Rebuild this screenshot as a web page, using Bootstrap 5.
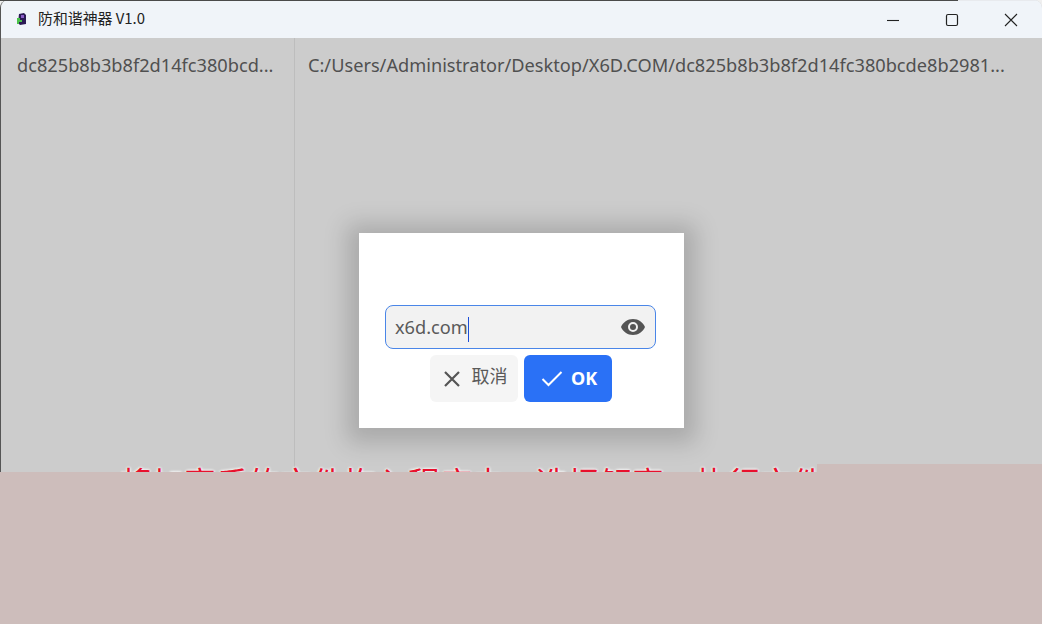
<!doctype html>
<html lang="zh">
<head>
<meta charset="utf-8">
<title>防和谐神器 V1.0</title>
<link rel="stylesheet" href="https://cdn.jsdelivr.net/npm/bootstrap@5.3.0/dist/css/bootstrap.min.css">
<style>
html,body{height:624px;overflow:hidden;margin:0;background:#f0f0f0}
body{font-family:"Noto Sans","Noto Sans CJK SC",sans-serif}
.desk{width:1042px;height:624px;overflow:hidden;position:relative;background:#f0f0f0}
.win{height:472px;background:#ccc;border-left:1px solid #555;border-radius:8px 8px 0 0;overflow:hidden;position:relative}
.lower{height:152px;background:#cdbdbb}
.tbar{height:38px;background:#f0f4f9;border-top:1px solid #e8eaee;font-family:"Noto Sans CJK SC",sans-serif;font-size:14.900px;color:#222}
.appname{margin-left:13px;gap:10px}
.appname span{position:relative;top:-1px}
.wctl{margin-right:2px}
.wbtn{width:59px;height:37px}
.panes{height:434px}
.lpane{width:294px;border-right:1px solid #bdbdbd;padding:14px 16px 0;flex:none}
.rpane{padding:14px 13px 0;min-width:0;flex:1}
.ptxt{font-size:18.2px;line-height:26px;color:#505050;white-space:nowrap}
.redline{position:absolute;left:119px;top:459px;font-size:32px;line-height:44px;color:#e8112d;white-space:nowrap;font-family:"Noto Sans CJK SC",sans-serif;text-shadow:0 0 3px #fff,0 0 3px #fff}
.dlg{position:absolute;left:359px;top:233px;width:325px;height:195px;background:#fff;box-shadow:0 3px 22px 12px rgba(0,0,0,.17);padding:72px 28px 0 26px}
.pw{height:44px;border:1.5px solid #4a86e8;border-radius:8px;background:#f2f2f2;padding:0 9px;font-size:18.2px;color:#5a5a5a}
.pw .val{padding-top:2px}
.caret{display:inline-block;width:1px;height:25px;background:#1d4fd8;vertical-align:middle}
.act{gap:6px;margin:6px 0 0 45px}
.mbtn{width:88px;height:47px;border-radius:6px;gap:11px;padding:0;border:0;font-size:18px}
.mbtn-c{background:#f5f5f5;color:#5a5a5a;font-family:"Noto Sans CJK SC",sans-serif;font-size:18px;padding-left:2px}
.mbtn-c span{position:relative;top:-3px}
.mbtn-o{background:#2a71f6;color:#fff;font-weight:700;gap:8px;padding-left:2px}
.cover{position:absolute;left:816px;right:0;top:464px;height:8px;background:#cdbdbb}
.bar-top{position:absolute;left:0;top:0;width:958px;height:1px;background:#4a4a4a}
</style>
</head>
<body>
<div class="desk">
  <div class="win">
    <div class="tbar d-flex align-items-center justify-content-between">
      <div class="appname d-flex align-items-center">
        <svg width="14" height="14" viewBox="0 0 14 14"><path d="M5 2 10 1 12 3V12L6 13 4 11Z" fill="#2b1a55"/><path d="M7 3h3v3H7z" fill="#8a5cc8"/><path d="M3 6h3v2h2v2H5v2H3z" fill="#49c24a"/></svg>
        <span>防和谐神器 V1.0</span>
      </div>
      <div class="wctl d-flex">
        <div class="wbtn d-flex align-items-center justify-content-center"><svg width="14" height="14" viewBox="0 0 14 14"><path d="M1 7.500h12" stroke="#222" stroke-width="1.100"/></svg></div>
        <div class="wbtn d-flex align-items-center justify-content-center"><svg width="14" height="14" viewBox="0 0 14 14"><rect x="1.500" y="1.500" width="11" height="11" rx="1.500" fill="none" stroke="#222" stroke-width="1.200"/></svg></div>
        <div class="wbtn d-flex align-items-center justify-content-center"><svg width="14" height="14" viewBox="0 0 14 14"><path d="M1 1l12 12M13 1 1 13" stroke="#222" stroke-width="1.100"/></svg></div>
      </div>
    </div>
    <div class="panes d-flex">
      <div class="lpane"><div class="ptxt">dc825b8b3b8f2d14fc380bcd...</div></div>
      <div class="rpane"><div class="ptxt">C:/Users/Administrator/Desktop/X6D.COM/dc825b8b3b8f2d14fc380bcde8b2981...</div></div>
    </div>
    <div class="redline">将加密后的文件拖入程序内，选择解密，执行文件</div>
    <div class="cover"></div>
  </div>
  <div class="lower"></div>
  <div class="bar-top"></div>
  <div class="dlg">
    <div class="pw d-flex align-items-center justify-content-between">
      <div class="val">x6d.com<span class="caret"></span></div>
      <svg width="26" height="18" viewBox="0 0 26 18"><path fill-rule="evenodd" d="M13 1C7.500 1 3 4.400 1 9c2 4.600 6.500 8 12 8s10-3.400 12-8C23 4.400 18.500 1 13 1ZM13 14a5 5 0 1 1 0-10 5 5 0 0 1 0 10Z" fill="#555"/><circle cx="13" cy="9" r="3" fill="#555"/></svg>
    </div>
    <div class="act d-flex">
      <button type="button" class="btn mbtn mbtn-c d-flex align-items-center justify-content-center">
        <svg width="18" height="18" viewBox="0 0 18 18"><path d="M2 2l14 14M16 2 2 16" stroke="#555" stroke-width="2.200"/></svg><span>取消</span>
      </button>
      <button type="button" class="btn mbtn mbtn-o d-flex align-items-center justify-content-center">
        <svg width="22" height="17" viewBox="0 0 22 17"><path d="M1.500 9 7.500 15 20.500 2" fill="none" stroke="#fff" stroke-width="2"/></svg><span>OK</span>
      </button>
    </div>
  </div>
</div>
</body>
</html>
